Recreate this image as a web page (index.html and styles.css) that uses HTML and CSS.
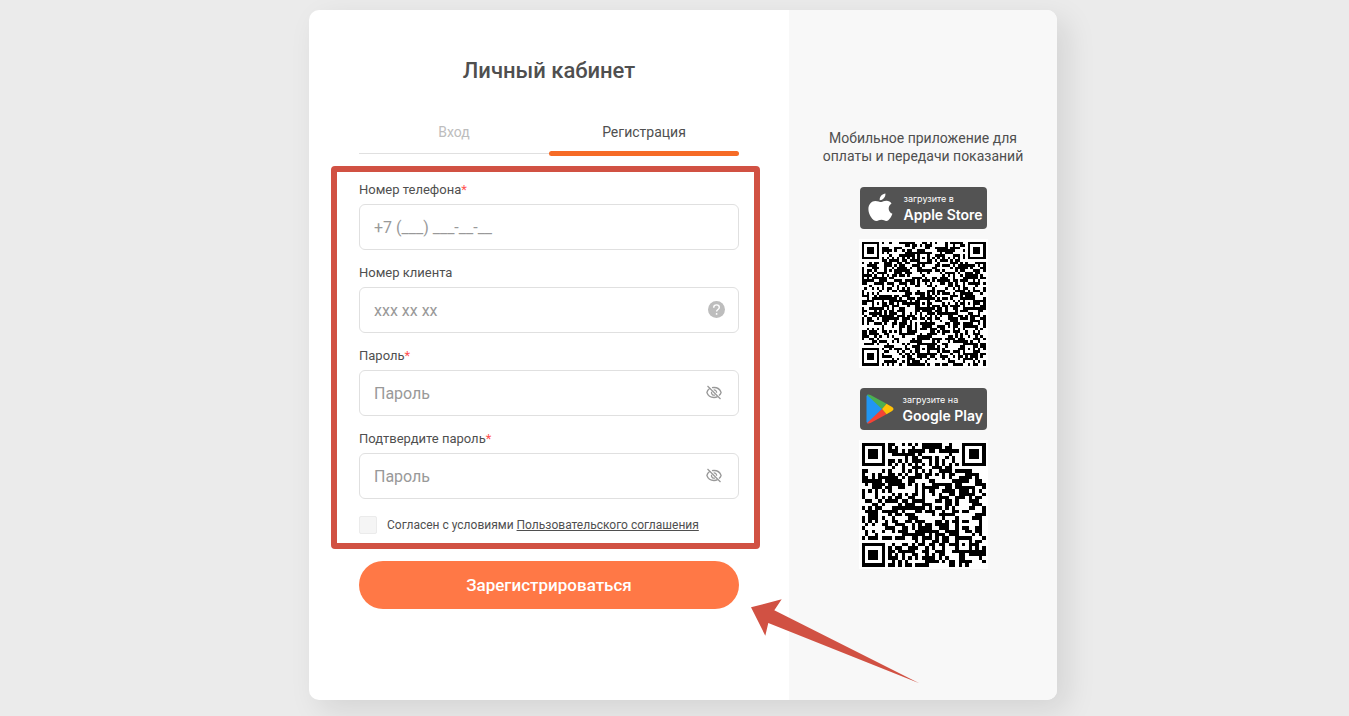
FILE: index.html
```html
<!DOCTYPE html>
<html lang="ru">
<head>
    <meta charset="UTF-8">
    <meta name="viewport" content="width=device-width, initial-scale=1.0">
    <title>Личный кабинет</title>
    <link rel="stylesheet" href="styles.css">
</head>
<body>
    <main class="page">
        <div class="card">
            <section class="account">
                <h1 class="title">Личный кабинет</h1>
                <nav class="tabs">
                    <a href="#login" class="tab">Вход</a>
                    <a href="#register" class="tab active">Регистрация</a>
                </nav>
                <form id="registerForm">
                    <div class="fields">
                        <div class="form-group">
                            <label for="phone">Номер телефона<span class="required">*</span></label>
                            <div class="control">
                                <input type="tel" id="phone" name="phone" placeholder="+7 (___) ___-__-__">
                            </div>
                        </div>
                        <div class="form-group">
                            <label for="client">Номер клиента</label>
                            <div class="control">
                                <input type="text" id="client" name="client" placeholder="xxx xx xx">
                                <button type="button" class="hint" aria-label="Подсказка">
                                    <svg width="18" height="18" viewBox="0 0 18 18">
                                        <circle cx="9.5" cy="8.5" r="8.5" fill="#bdbdbd"/>
                                        <path d="M6.7 6.7C6.7 4.9 7.8 3.9 9.5 3.9s2.800 1 2.800 2.500c0 2-2.700 2.200-2.700 4.200" fill="none" stroke="#fff" stroke-width="1.4"/>
                                        <circle cx="9.6" cy="12.9" r="0.9" fill="#fff"/>
                                    </svg>
                                </button>
                            </div>
                        </div>
                        <div class="form-group">
                            <label for="password">Пароль<span class="required">*</span></label>
                            <div class="control">
                                <input type="password" id="password" name="password" placeholder="Пароль">
                                <button type="button" class="eye" aria-label="Показать пароль">
                                    <svg width="16" height="16" viewBox="0 0 16 16"><use href="#eye-off"/></svg>
                                </button>
                            </div>
                        </div>
                        <div class="form-group">
                            <label for="confirm">Подтвердите пароль<span class="required">*</span></label>
                            <div class="control">
                                <input type="password" id="confirm" name="confirm" placeholder="Пароль">
                                <button type="button" class="eye" aria-label="Показать пароль">
                                    <svg width="16" height="16" viewBox="0 0 16 16"><use href="#eye-off"/></svg>
                                </button>
                            </div>
                        </div>
                        <div class="agree">
                            <input type="checkbox" id="agree" name="agree">
                            <label for="agree">Согласен с условиями <a href="#terms">Пользовательского соглашения</a></label>
                        </div>
                    </div>
                    <button type="submit" class="submit">Зарегистрироваться</button>
                </form>
            </section>

            <aside class="apps">
                <p class="apps-text">Мобильное приложение для оплаты и передачи показаний</p>
                <a href="#appstore" class="badge">
                    <svg class="apple" width="26" height="30" viewBox="0 0 26 30">
                        <path fill="#fff" d="M17.4 0.5c.2 1.9-.5 3.6-1.6 4.8-1.1 1.3-2.6 2-4.1 1.9-.2-1.7.6-3.5 1.6-4.6C14.4 1.4 16 .6 17.4.5zM13.3 9c1.2 0 2.9-1.3 5.3-1.2 2 .1 3.8 1 4.900 2.600-4.200 2.700-3.500 8.500.9 10.300-.9 2.500-3.300 7.200-5.900 7.300-2 .1-2.600-1.200-5-1.200s-3.100 1.200-5 1.200C4.600 28 .4 21.300.4 16.200.4 11 3.700 8 7.300 7.900 9.900 7.900 11.800 9 13.300 9z"/>
                    </svg>
                    <span class="badge-text"><small>загрузите в</small>Apple Store</span>
                </a>
                <svg class="qr" id="qrApple" role="img" aria-label="QR App Store"></svg>
                <a href="#googleplay" class="badge google">
                    <svg width="28" height="30" viewBox="0 0 28 30">
                        <path fill="#2196f3" d="M.5 2.5V27.5Q.5 29 2 29.5L16.5 15 2 .5Q.5 1 .5 2.5z"/>
                        <path fill="#4caf50" d="M1 1Q2.5-.1 4.5.9L20.5 9.8 16 15z"/>
                        <path fill="#f44336" d="M1 29Q2.5 30.1 4.5 29.1L20.5 20.2 16 15z"/>
                        <path fill="#ffc107" d="M20.5 9.8l5.6 3.2q2.8 2 0 4l-5.6 3.2L16 15z"/>
                    </svg>
                    <span class="badge-text"><small>загрузите на</small>Google Play</span>
                </a>
                <svg class="qr" id="qrGoogle" role="img" aria-label="QR Google Play"></svg>
            </aside>

            <svg class="arrow" width="170" height="86" viewBox="0 0 170 86">
                <path fill="#d15143" d="M1 8.3L31.7.3 24.3 11.3 169.3 84.3 18.3 24 15.3 36.7z"/>
            </svg>
        </div>
    </main>

    <svg class="sprite" width="0" height="0">
        <symbol id="eye-off" viewBox="0 0 16 16">
            <g fill="none" stroke="#999" stroke-width="1.3">
                <path d="M4.2 3C2.6 4 1.4 5.7.9 7.5c1 3 3.8 5 7.1 5 1.3 0 2.5-.3 3.6-.9M6 2.7C6.600 2.500 7.300 2.500 8 2.500c3.300 0 6.100 2 7.100 5-.4 1.200-1.100 2.300-2.100 3.100"/>
                <path d="M5.6 6.700a2.600 2.600 0 0 0 3.400 3.300M7.700 4.900a2.600 2.600 0 0 1 2.900 2.800"/>
                <path d="M1.500 1l13 13"/>
            </g>
        </symbol>
    </svg>
    <script src="script.js"></script>
</body>
</html>
```
FILE: styles.css
```css
body {
    margin: 0;
    background-color: #ebebeb;
    color: #4f4f4f;
    font-family: Roboto, "Liberation Sans", sans-serif;
    font-size: 14px;
}

.page {
    display: flex;
    justify-content: center;
    padding: 10px 0 16px 17px;
}

.card {
    position: relative;
    display: flex;
    width: 748px;
    min-height: calc(100vh - 26px);
    border-radius: 10px;
    background: white;
    box-shadow: 10px 10px 30px rgba(0, 0, 0, 0.1);
}

.account {
    flex: 1;
    padding: 45px 50px;
}

.title {
    margin: 0;
    font-size: 22px;
    font-weight: 500;
    line-height: 32px;
    text-align: center;
}

.tabs {
    display: flex;
    align-items: flex-start;
    margin-top: 35px;
}

.tab {
    flex: 1;
    height: 31px;
    border-bottom: 1px solid #e0e0e0;
    color: #bdbdbd;
    line-height: 20px;
    text-align: center;
    text-decoration: none;
}

.tab.active {
    position: relative;
    border-color: transparent;
    color: #4f4f4f;
}

.tab.active::after {
    content: "";
    position: absolute;
    left: 0;
    right: 0;
    bottom: -3px;
    height: 5px;
    border-radius: 3px;
    background: #f66b26;
}

.fields {
    margin: 12px -21px 12px -28px;
    padding: 9px 15px 9px 22px;
    border: 6px solid #d15143;
    border-radius: 4px;
}

.form-group {
    display: flex;
    flex-direction: column;
    gap: 5px;
    margin-bottom: 14px;
}

.form-group label {
    font-size: 13px;
    line-height: 18px;
}

.required {
    color: #ff5252;
}

.control {
    display: flex;
    align-items: center;
    height: 44px;
    padding: 0 13px 0 14px;
    border: 1px solid #e0e0e0;
    border-radius: 6px;
}

.control input {
    flex: 1;
    min-width: 0;
    padding: 0;
    border: none;
    outline: none;
    background: none;
    color: #4f4f4f;
    font-family: inherit;
    font-size: 16px;
}

.control input::placeholder {
    color: #999;
}

.hint, .eye {
    display: flex;
    padding: 0;
    border: none;
    background: none;
    cursor: pointer;
}

.eye {
    margin-right: 3px;
}

.agree {
    display: flex;
    align-items: center;
    gap: 10px;
    padding-top: 3px;
    font-size: 12px;
    line-height: 18px;
}

.agree input {
    appearance: none;
    width: 18px;
    height: 18px;
    margin: 0;
    border: 1px solid #ebebeb;
    border-radius: 2px;
    background: #f5f5f5;
}

.agree a {
    color: inherit;
}

.submit {
    width: 100%;
    height: 48px;
    border: none;
    border-radius: 24px;
    background-color: #ff7846;
    color: white;
    font-family: inherit;
    font-size: 17px;
    font-weight: 500;
    cursor: pointer;
}

.apps {
    display: flex;
    flex-direction: column;
    align-items: center;
    width: 268px;
    padding-top: 119px;
    border-radius: 0 10px 10px 0;
    background: #f8f8f8;
}

.apps-text {
    width: 210px;
    margin: 0 0 22px;
    line-height: 18px;
    text-align: center;
}

.badge {
    display: flex;
    align-items: center;
    gap: 10px;
    box-sizing: border-box;
    width: 127px;
    height: 42px;
    padding-left: 8px;
    border-radius: 4px;
    background: #535353;
    color: white;
    font-family: Inter, sans-serif;
    font-size: 14px;
    font-weight: 600;
    line-height: 16px;
    text-decoration: none;
    white-space: nowrap;
}

.google {
    padding-left: 6px;
    gap: 9px;
}

.badge-text {
    padding-bottom: 3px;
}

.badge small {
    display: block;
    font-size: 9px;
    font-weight: 400;
}

.qr {
    width: 129px;
    height: 129px;
    margin: 10px 0 20px;
    background: white;
}

.arrow {
    position: absolute;
    top: 589px;
    left: 441px;
    pointer-events: none;
}

.sprite {
    position: absolute;
}
```
FILE: script.js
```js
// size - modules per side, marks - centers of the alignment squares
function drawQr(id, size, marks, seed) {
    const svg = document.getElementById(id);
    const quiet = size * 2.5 / 124;
    const grid = [];

    for (let y = 0; y < size; y++) {
        grid.push([]);
        for (let x = 0; x < size; x++) {
            seed = (seed * 1103515245 + 12345) % 2147483648;
            grid[y].push(seed / 2147483648 < 0.53);
        }
    }

    // timing lines
    for (let i = 0; i < size; i++) {
        grid[6][i] = i % 2 === 0;
        grid[i][6] = i % 2 === 0;
    }

    const square = (cx, cy, radius, isDark) => {
        for (let y = cy - radius; y <= cy + radius; y++) {
            for (let x = cx - radius; x <= cx + radius; x++) {
                if (x < 0 || y < 0 || x >= size || y >= size) continue;
                grid[y][x] = isDark(Math.max(Math.abs(x - cx), Math.abs(y - cy)));
            }
        }
    };

    marks.forEach(([x, y]) => square(x, y, 2, d => d !== 1));
    [[3, 3], [size - 4, 3], [3, size - 4]].forEach(([x, y]) => square(x, y, 4, d => d < 2 || d === 3));

    let path = "";
    grid.forEach((row, y) => row.forEach((dark, x) => {
        if (dark) path += `M${x} ${y}h1v1h-1z`;
    }));

    const full = size + quiet * 2;
    svg.setAttribute("viewBox", `${-quiet} ${-quiet} ${full} ${full}`);
    svg.setAttribute("shape-rendering", "crispEdges");
    svg.innerHTML = `<path d="${path}"/>`;
}

drawQr("qrApple", 49, [[6, 24], [24, 6], [24, 24], [24, 42], [42, 24], [42, 42]], 77);
drawQr("qrGoogle", 37, [[30, 30]], 2024);
```
